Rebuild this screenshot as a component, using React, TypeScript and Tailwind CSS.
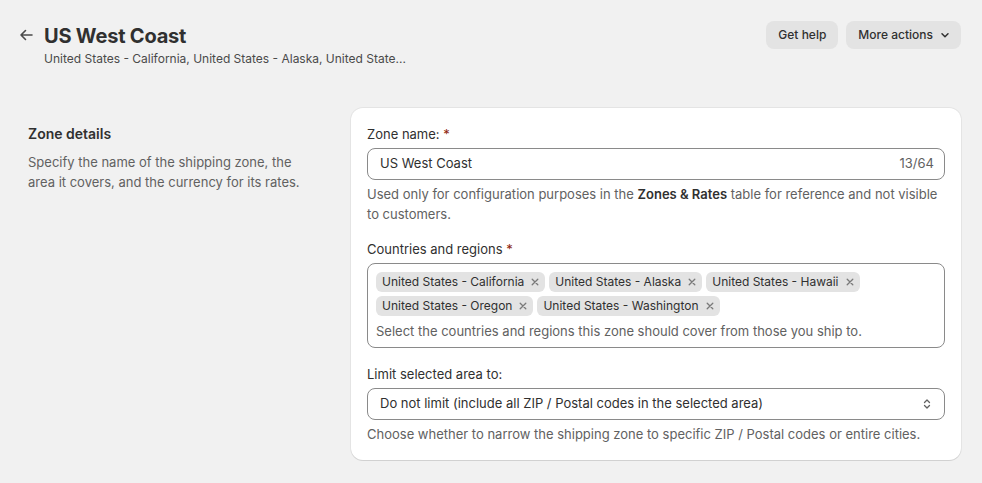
import React from "react";

const chips = [
  ["United States - California", "United States - Alaska", "United States - Hawaii"],
  ["United States - Oregon", "United States - Washington"],
];

function Chip({ label }: { label: string }) {
  return (
    <span className="inline-flex h-5 items-center gap-[6px] rounded-[6px] bg-[#e3e3e3] pl-[6px] pr-[5px] text-[12px] leading-5 text-[#303030]">
      {label}
      <svg width="10" height="10" viewBox="0 0 10 10" className="text-[#7a7a7a]">
        <path d="M2.2 2.2l5.6 5.6M7.8 2.2l-5.6 5.6" stroke="currentColor" strokeWidth="1.3" strokeLinecap="round" />
      </svg>
    </span>
  );
}

export default function App() {
  return (
    <div
      className="min-h-[483px] w-full bg-[#f1f1f1] text-[#303030]"
      style={{ fontFamily: "Inter, 'Noto Sans', sans-serif" }}
    >
      <div className="flex items-start justify-between pl-4 pr-[21px] pt-[21px]">
        <div className="flex items-start gap-2">
          <button className="mt-[4px] flex h-5 w-5 items-center justify-center text-[#4a4a4a]">
            <svg width="16" height="16" viewBox="0 0 16 16" fill="none">
              <path d="M14 8H3M7.5 3.5L3 8l4.5 4.5" stroke="currentColor" strokeWidth="1.6" strokeLinecap="round" strokeLinejoin="round" />
            </svg>
          </button>
          <div className="flex flex-col">
            <h1 className="mt-[1px] text-[20px] font-bold leading-[28px] tracking-[-0.2px] text-[#303030]">US West Coast</h1>
            <p className="mt-[1px] text-[12px] leading-4 text-[#4a4a4a]">
              United States - California, United States - Alaska, United State...
            </p>
          </div>
        </div>
        <div className="flex items-center gap-2">
          <button className="h-7 rounded-[8px] bg-[#e3e3e3] px-3 text-[12px] font-medium text-[#303030]">Get help</button>
          <button className="flex h-7 items-center gap-[6px] rounded-[8px] bg-[#e3e3e3] pl-3 pr-[10px] text-[12px] font-medium text-[#303030]">
            More actions
            <svg width="12" height="12" viewBox="0 0 12 12" fill="none">
              <path d="M3 4.75L6 7.75l3-3" stroke="currentColor" strokeWidth="1.5" strokeLinecap="round" strokeLinejoin="round" />
            </svg>
          </button>
        </div>
      </div>

      <div className="mt-[41px] flex gap-[43px] pl-[28px] pr-[21px]">
        <div className="w-[280px] shrink-0 pt-4">
          <h2 className="text-[14px] font-semibold leading-5 text-[#303030]">Zone details</h2>
          <p className="mt-2 text-[13px] leading-5 text-[#616161]">
            Specify the name of the shipping zone, the area it covers, and the currency for its rates.
          </p>
        </div>

        <div className="flex-1 rounded-[12px] bg-white p-4 shadow-[0_1px_0_0_rgba(26,26,26,0.09),0_0_0_1px_rgba(0,0,0,0.05)]">
          <div className="flex flex-col">
            <label className="text-[13px] leading-5 text-[#303030]">
              Zone name: <span className="text-[#8e1f0b]">*</span>
            </label>
            <div className="mt-1 flex h-8 items-center justify-between rounded-[8px] border border-[#8a8a8a] pl-3 pr-[10px]">
              <span className="text-[13px] text-[#303030]">US West Coast</span>
              <span className="text-[13px] text-[#616161]">13/64</span>
            </div>
            <p className="mt-1 text-[13px] leading-5 text-[#616161]">
              Used only for configuration purposes in the <b className="font-semibold text-[#303030]">Zones &amp; Rates</b> table for reference and not visible to customers.
            </p>
          </div>

          <div className="mt-[15px] flex flex-col">
            <label className="text-[13px] leading-5 text-[#303030]">
              Countries and regions <span className="text-[#8e1f0b]">*</span>
            </label>
            <div className="mt-1 rounded-[8px] border border-[#8a8a8a] px-2 pb-[6px] pt-2">
              <div className="flex flex-col gap-1">
                {chips.map((row, i) => (
                  <div key={i} className="flex gap-1">
                    {row.map((c) => (
                      <Chip key={c} label={c} />
                    ))}
                  </div>
                ))}
              </div>
              <p className="mt-[5px] text-[13px] leading-5 text-[#616161]">
                Select the countries and regions this zone should cover from those you ship to.
              </p>
            </div>
          </div>

          <div className="mt-4 flex flex-col">
            <label className="text-[13px] leading-5 text-[#303030]">Limit selected area to:</label>
            <div className="mt-1 flex h-8 items-center justify-between rounded-[8px] border border-[#8a8a8a] pl-3 pr-[10px]">
              <span className="text-[13px] text-[#303030]">Do not limit (include all ZIP / Postal codes in the selected area)</span>
              <svg width="14" height="14" viewBox="0 0 14 14" fill="none" className="text-[#616161]">
                <path d="M4.5 5.5L7 3l2.5 2.5M4.5 8.5L7 11l2.5-2.5" stroke="currentColor" strokeWidth="1.3" strokeLinecap="round" strokeLinejoin="round" />
              </svg>
            </div>
            <p className="mt-1 text-[13px] leading-5 text-[#616161]">
              Choose whether to narrow the shipping zone to specific ZIP / Postal codes or entire cities.
            </p>
          </div>
        </div>
      </div>
    </div>
  );
}
